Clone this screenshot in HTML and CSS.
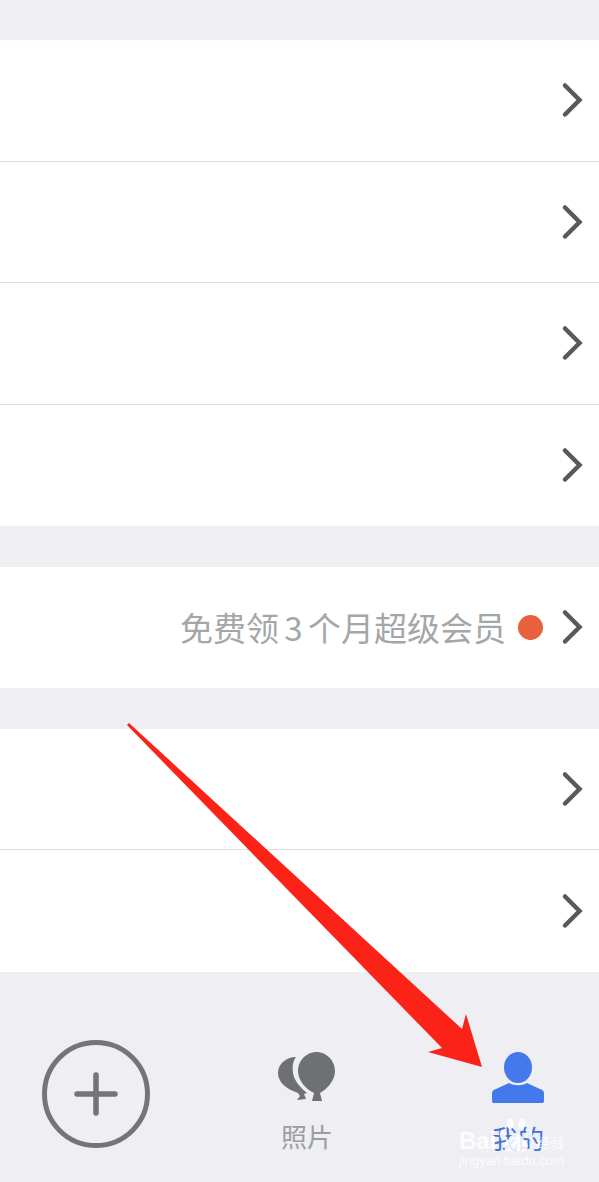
FILE: index.html
```html
<!DOCTYPE html>
<html lang="zh-CN">
<head>
    <meta charset="UTF-8">
    <meta name="viewport" content="width=device-width, initial-scale=1.0">
    <title>我的</title>
    <link rel="stylesheet" href="styles.css">
</head>
<body>
    <svg class="sprite" width="0" height="0">
        <symbol id="chevron" viewBox="0 0 24 36">
            <path d="M4 3.500 L18.500 18 L4 32.500" fill="none" stroke="#58595c" stroke-width="4.500" stroke-linecap="round" stroke-linejoin="miter"/>
        </symbol>
    </svg>

    <div class="page">
        <div class="group">
            <div class="row"><svg class="chevron"><use href="#chevron"/></svg></div>
            <div class="row"><svg class="chevron"><use href="#chevron"/></svg></div>
            <div class="row"><svg class="chevron"><use href="#chevron"/></svg></div>
            <div class="row"><svg class="chevron"><use href="#chevron"/></svg></div>
        </div>
        <div class="group">
            <div class="row">
                <span class="promo">免费领 3 个月超级会员</span>
                <span class="dot"></span>
                <svg class="chevron"><use href="#chevron"/></svg>
            </div>
        </div>
        <div class="group">
            <div class="row"><svg class="chevron"><use href="#chevron"/></svg></div>
            <div class="row"><svg class="chevron"><use href="#chevron"/></svg></div>
        </div>

        <div class="tabbar">
            <div class="add-btn">
                <svg width="44" height="44" viewBox="0 0 44 44">
                    <path d="M22 3 V41 M3 22 H41" stroke="#737578" stroke-width="5.500" stroke-linecap="round"/>
                </svg>
            </div>
            <div class="tab tab-photos">
                <svg width="58" height="50" viewBox="0 0 58 50">
                    <path d="M18 5 C8 5 0 12 0 21 C0 30 8 37 20 41 L22 44 L19 48 L28 47 L26 42 L29 41 C23 36 16 29 15 21 C14 14 15 9 18 5 Z" fill="#6e7174"/>
                    <path d="M38.500 0 C28 0 20 9 20 19 C20 29 29 38 36 41 L34 49 L44 49 L42 41 C48 38 57 29 57 19 C57 9 49 0 38.500 0 Z" fill="#6e7174"/>
                </svg>
                <span class="tab-label">照片</span>
            </div>
            <div class="tab tab-me">
                <svg width="52" height="52" viewBox="0 0 52 52">
                    <ellipse cx="26" cy="15.500" rx="14" ry="15.500" fill="#4479ec"/>
                    <path d="M0 42 C0 39 1 38 4 37 L17 31 C22 34 30 34 35 31 L48 37 C51 38 52 39 52 42 V49 C52 50.500 51 51 50 51 H2 C1 51 0 50.500 0 49 Z" fill="#4479ec"/>
                </svg>
                <span class="tab-label tab-label-active">我的</span>
            </div>
        </div>

        <!-- red arrow drawn over the screenshot -->
        <svg class="arrow" width="599" height="1182" viewBox="0 0 599 1182">
            <path d="M127 725 L129 723 L462 1029 L466 1014 L482 1067 L428 1052 L442 1048 Z" fill="#fb2318"/>
        </svg>

        <!-- watermark -->
        <div class="watermark">
            <div class="wm-main">
                <span>Bai</span>
                <svg class="wm-paw" width="40" height="36" viewBox="-2 0 40 44">
                    <ellipse cx="11" cy="7" rx="4.500" ry="6.500"/>
                    <ellipse cx="25" cy="7" rx="4.500" ry="6.500"/>
                    <ellipse cx="2" cy="20" rx="4" ry="5.500"/>
                    <ellipse cx="34" cy="20" rx="4" ry="5.500"/>
                    <path d="M18 19 C12 19 10 25 6 29 C2 33 3 41 10 41 C13 41 15 40 18 40 C21 40 24 41 27 41 C33 41 34 33 30 29 C26 25 24 19 18 19 Z"/>
                </svg>
                <span class="wm-cn">经验</span>
            </div>
            <div class="wm-sub">jingyan.baidu.com</div>
        </div>
    </div>
</body>
</html>
```

FILE: styles.css
```css
body {
    margin: 0;
    background-color: #eeeef3;
    font-family: "Noto Sans CJK SC", "Liberation Sans", sans-serif;
}

.sprite {
    display: block;
    height: 0;
}

.page {
    position: relative;
    width: 599px;
    height: 1182px;
    overflow: hidden;
    padding-top: 40px;
    box-sizing: border-box;
}

.group {
    background-color: #fff;
    margin-bottom: 40.500px;
}

.group:nth-child(3) {
    margin-bottom: 0;
}

.row {
    height: 121.500px;
    box-sizing: border-box;
    border-bottom: 1px solid #dedee0;
    display: flex;
    justify-content: flex-end;
    align-items: center;
    padding-right: 14px;
}

.row:last-child {
    border-bottom: none;
}

.chevron {
    width: 24px;
    height: 36px;
}

.promo {
    color: #a3a7a9;
    font-size: 33px;
    word-spacing: -2px;
    margin-right: 12px;
}

.dot {
    width: 25px;
    height: 25px;
    border-radius: 50%;
    background-color: #e8603c;
    margin-right: 18px;
}

.tabbar {
    display: flex;
    align-items: flex-start;
    padding: 68px 0 0 42px;
}

.add-btn {
    width: 108px;
    height: 108px;
    box-sizing: border-box;
    border: 5px solid #737578;
    border-radius: 50%;
    display: flex;
    justify-content: center;
    align-items: center;
}

.tab {
    width: 60px;
    display: flex;
    flex-direction: column;
    align-items: center;
    margin-top: 12px;
}

.tab-photos {
    margin-left: 127px;
}

.tab-me {
    margin-left: 151px;
}

.tab-label {
    color: #9b9ea1;
    font-size: 26px;
    line-height: 36px;
    margin-top: 16px;
    white-space: nowrap;
}

.tab-label-active {
    color: #3f74d8;
}

.arrow {
    position: absolute;
    top: 0;
    left: 0;
}

.watermark {
    position: absolute;
    left: 459px;
    top: 1124px;
    color: rgba(255, 255, 255, 0.85);
    font-family: "Liberation Sans", "Noto Sans CJK SC", sans-serif;
}

.wm-main {
    display: flex;
    align-items: flex-end;
    font-size: 24px;
    line-height: 34px;
    font-weight: 700;
}

.wm-paw {
    fill: rgba(255, 255, 255, 0.85);
    margin: -6px 0 4px 0;
}

.wm-cn {
    font-size: 14px;
    font-weight: 400;
    line-height: 30px;
}

.wm-sub {
    font-size: 13px;
    line-height: 16px;
    margin-top: -5px;
}
```
